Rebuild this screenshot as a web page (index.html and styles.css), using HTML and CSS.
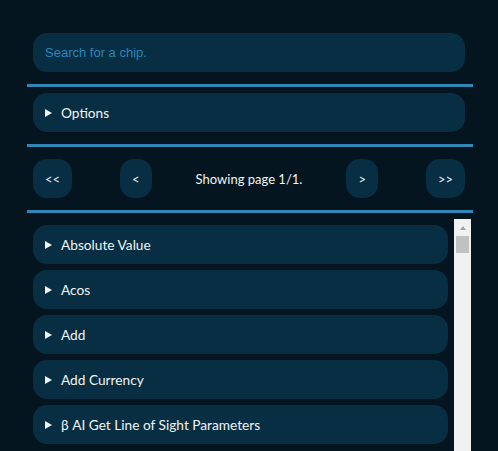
FILE: index.html
```html
<!DOCTYPE html>
<html>
<head>
<meta charset="utf-8">
<link rel="stylesheet" href="styles.css">
</head>
<body>
<div class="app">
  <div class="block">
    <input class="search" type="text" placeholder="Search for a chip.">
  </div>
  <hr class="sep">
  <div class="block">
    <details class="card"><summary class="row"><span class="tri"></span>Options</summary></details>
  </div>
  <hr class="sep">
  <div class="block pager">
    <button class="pbtn">&lt;&lt;</button>
    <div class="pmid">
      <button class="pbtn">&lt;</button>
      <span class="ptext">Showing page 1/1.</span>
      <button class="pbtn">&gt;</button>
    </div>
    <button class="pbtn">&gt;&gt;</button>
  </div>
  <hr class="sep">
  <div class="list">
    <div class="items">
      <details class="card"><summary class="row"><span class="tri"></span>Absolute Value</summary></details>
      <details class="card"><summary class="row"><span class="tri"></span>Acos</summary></details>
      <details class="card"><summary class="row"><span class="tri"></span>Add</summary></details>
      <details class="card"><summary class="row"><span class="tri"></span>Add Currency</summary></details>
      <details class="card"><summary class="row"><span class="tri"></span>β AI Get Line of Sight Parameters</summary></details>
    </div>
    <div class="vscroll">
      <div class="sb-up"></div>
      <div class="sb-thumb"></div>
    </div>
  </div>
</div>
</body>
</html>
```
FILE: styles.css
```css
html, body {
  margin: 0;
  padding: 0;
  background: #04151f;
  overflow: hidden;
}
body {
  font-family: Lato, "Open Sans", sans-serif;
  color: #f2f4f5;
  font-size: 13.7px;
}
.app {
  width: 446px;
  margin-left: 27px;
  padding-top: 33px;
}
.block {
  margin: 0 8px 12px 6px;
}
.sep {
  border: none;
  height: 3px;
  background: #2f87b6;
  margin: 0 0 6px 0;
}
.sep + .pager { margin-top: 12px; }
.search {
  display: block;
  box-sizing: border-box;
  width: 100%;
  height: 39px;
  border: none;
  outline: none;
  border-radius: 14px;
  background: #082e43;
  padding: 0 12px;
  font-family: "Liberation Sans", Arial, sans-serif;
  font-size: 13px;
  color: #e0e8ee;
}
.search::placeholder {
  color: #2b86b9;
}
.card {
  background: #082e43;
  border-radius: 14px;
}
.row {
  list-style: none;
  display: flex;
  align-items: center;
  height: 39px;
  padding: 0 12px;
  cursor: pointer;
  line-height: 15px;
}
.row::-webkit-details-marker { display: none; }
.tri {
  width: 0;
  height: 0;
  border-left: 7px solid #f2f4f5;
  border-top: 4px solid transparent;
  border-bottom: 4px solid transparent;
  margin-right: 9px;
}
.pager {
  display: flex;
  justify-content: space-between;
  align-items: center;
}
.pmid {
  display: flex;
  align-items: center;
  gap: 44px;
}
.pbtn {
  height: 39px;
  border: none;
  border-radius: 14px;
  background: #082e43;
  color: #f2f4f5;
  font-family: Lato, sans-serif;
  font-size: 13px;
  padding: 0 12px;
}
.ptext {
  font-size: 13px;
}
.list {
  width: 444px;
  height: 240px;
  display: flex;
}
.items {
  flex: 1;
  padding: 6px;
  display: flex;
  flex-direction: column;
  gap: 6px;
  overflow: hidden;
}
.items .card { flex: none; }
.vscroll {
  width: 17px;
  flex: none;
  background: #f1f1f1;
  display: flex;
  flex-direction: column;
  align-items: center;
}
.sb-up {
  height: 17px;
  width: 17px;
  display: flex;
  justify-content: center;
}
.sb-up::before {
  content: "";
  margin-top: 7px;
  width: 0;
  height: 0;
  border-bottom: 4px solid #a3a3a3;
  border-left: 3.5px solid transparent;
  border-right: 3.5px solid transparent;
}
.sb-thumb {
  width: 13px;
  height: 17px;
  background: #c1c1c1;
}
```
